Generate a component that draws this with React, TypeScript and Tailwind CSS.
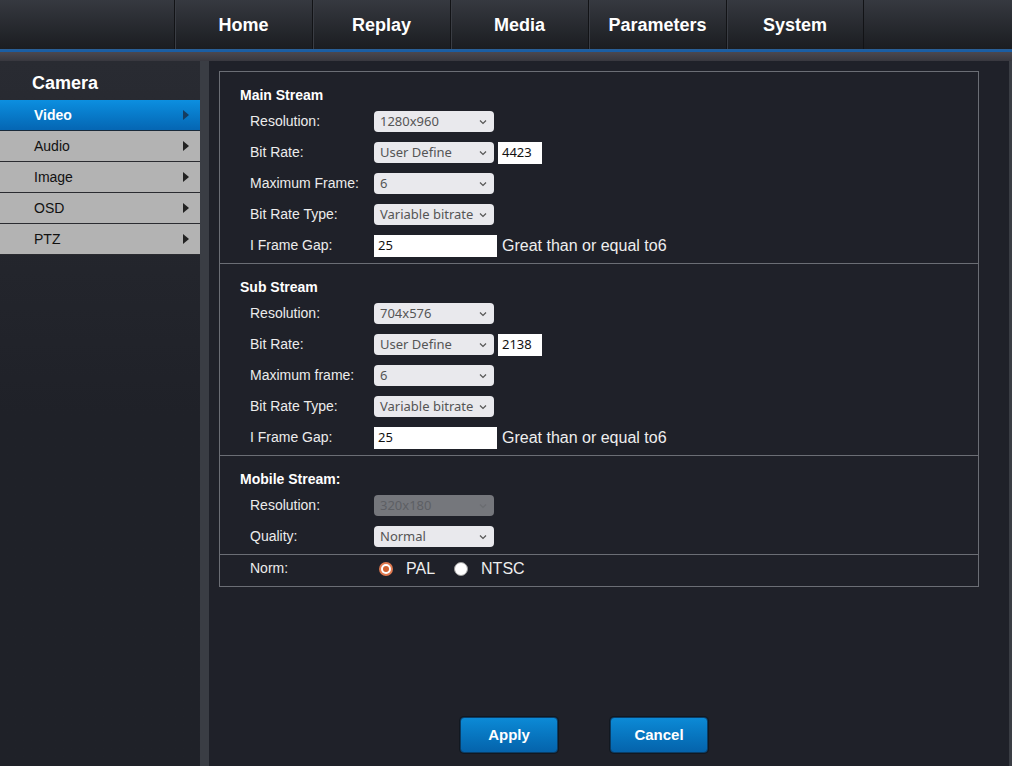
import React from "react";

const navItems = ["Home", "Replay", "Media", "Parameters", "System"];
const menu = ["Video", "Audio", "Image", "OSD", "PTZ"];

function Chevron({ color = "#555" }: { color?: string }) {
  return (
    <svg width="8" height="6" viewBox="0 0 8 6" className="shrink-0">
      <path d="M1 1.5 L4 4.5 L7 1.5" fill="none" stroke={color} strokeWidth="1.2" />
    </svg>
  );
}

function Select({ value, disabled = false }: { value: string; disabled?: boolean }) {
  return (
    <div
      className={
        disabled
          ? "w-[120px] h-[21px] rounded-[4px] bg-[#75777c] flex items-center justify-between pl-[6px] pr-[7px] text-[13px] text-[#5d5f64]"
          : "w-[120px] h-[21px] rounded-[4px] bg-[#e9e9ed] flex items-center justify-between pl-[6px] pr-[7px] text-[13px] text-[#555]"
      }
      style={{ fontFamily: '"Noto Sans", sans-serif' }}
    >
      <span className="whitespace-nowrap leading-none">{value}</span>
      <Chevron color={disabled ? "#6a6c70" : "#555"} />
    </div>
  );
}

function TextInput({ value, w }: { value: string; w: string }) {
  return (
    <div
      className={`${w} h-[22px] bg-white flex items-center pl-[4px] text-[13px] text-[#111]`}
      style={{ fontFamily: '"Noto Sans", sans-serif' }}
    >
      {value}
    </div>
  );
}

function Row({ label, children }: { label: string; children?: React.ReactNode }) {
  return (
    <div className="h-[31px] flex items-center pl-[30px]">
      <div className="w-[124px] text-[14px] text-[#ececec]">{label}</div>
      <div className="flex items-center">{children}</div>
    </div>
  );
}

function Heading({ text }: { text: string }) {
  return <div className="h-[21px] flex items-center pl-[20px] text-[14px] font-bold text-white">{text}</div>;
}

function Arrow({ color }: { color: string }) {
  return (
    <svg width="6" height="10" viewBox="0 0 6 10">
      <path d="M0 0 L6 5 L0 10 Z" fill={color} />
    </svg>
  );
}

export default function App() {
  return (
    <div
      className="w-[1012px] h-[766px] overflow-hidden bg-[#1f2128] flex flex-col"
      style={{ fontFamily: '"Liberation Sans", Arial, sans-serif' }}
    >
      {/* Header */}
      <div className="h-[49px] bg-gradient-to-b from-[#363940] to-[#1b1d21] flex pl-[174px]">
        {navItems.map((n, i) => (
          <div
            key={n}
            className={`w-[138px] h-full flex items-center justify-center pt-[2px] text-[18px] font-bold text-white border-l border-[#121316] shadow-[inset_1px_0_0_#3a3d44] ${
              i === navItems.length - 1 ? "border-r" : ""
            }`}
          >
            {n}
          </div>
        ))}
      </div>
      <div className="h-[1px] bg-[#2a5f96]" />
      <div className="h-[2px] bg-[#1a5ea5]" />
      <div className="h-[9px] bg-gradient-to-b from-[#4b4850] to-[#38383f]" />

      {/* Body */}
      <div className="flex-1 flex">
        {/* Sidebar */}
        <div className="w-[200px] bg-gradient-to-b from-[#292b32] via-[#1f2128] to-[#1f2128] flex flex-col">
          <div className="h-[39px] flex items-center pl-[32px] pt-[6px] text-[18px] font-bold text-white">Camera</div>
          {menu.map((m, i) =>
            i === 0 ? (
              <div
                key={m}
                className="h-[31px] border-b border-[#1a2a3a] bg-gradient-to-b from-[#0c8fe0] to-[#0566b3] flex items-center justify-between pl-[34px] pr-[11px] text-[14px] font-bold text-white"
              >
                <span>{m}</span>
                <Arrow color="#163c60" />
              </div>
            ) : (
              <div
                key={m}
                className="h-[31px] border-b border-[#2a2b30] bg-[#b3b3b3] flex items-center justify-between pl-[34px] pr-[11px] text-[14px] text-[#111]"
              >
                <span>{m}</span>
                <Arrow color="#222" />
              </div>
            )
          )}
        </div>
        <div className="w-[9px] bg-[#3a3d44]" />

        {/* Main */}
        <div className="flex-1 bg-[#1f2129] flex flex-col pl-[10px] pt-[10px]">
          <div className="w-[760px] border border-[#6b6e75] flex flex-col">
            <div className="pt-[13px] pb-[2px] border-b border-[#6b6e75]">
              <Heading text="Main Stream" />
              <Row label="Resolution:">
                <Select value="1280x960" />
              </Row>
              <Row label="Bit Rate:">
                <Select value="User Define" />
                <div className="ml-[4px]">
                  <TextInput value="4423" w="w-[44px]" />
                </div>
              </Row>
              <Row label="Maximum Frame:">
                <Select value="6" />
              </Row>
              <Row label="Bit Rate Type:">
                <Select value="Variable bitrate" />
              </Row>
              <Row label="I Frame Gap:">
                <TextInput value="25" w="w-[123px]" />
                <span className="ml-[5px] text-[16px] text-[#eeeeee]">Great than or equal to6</span>
              </Row>
            </div>
            <div className="pt-[13px] pb-[2px] border-b border-[#6b6e75]">
              <Heading text="Sub Stream" />
              <Row label="Resolution:">
                <Select value="704x576" />
              </Row>
              <Row label="Bit Rate:">
                <Select value="User Define" />
                <div className="ml-[4px]">
                  <TextInput value="2138" w="w-[44px]" />
                </div>
              </Row>
              <Row label="Maximum frame:">
                <Select value="6" />
              </Row>
              <Row label="Bit Rate Type:">
                <Select value="Variable bitrate" />
              </Row>
              <Row label="I Frame Gap:">
                <TextInput value="25" w="w-[123px]" />
                <span className="ml-[5px] text-[16px] text-[#eeeeee]">Great than or equal to6</span>
              </Row>
            </div>
            <div className="pt-[13px] pb-[2px] border-b border-[#6b6e75]">
              <Heading text="Mobile Stream:" />
              <Row label="Resolution:">
                <Select value="320x180" disabled />
              </Row>
              <Row label="Quality:">
                <Select value="Normal" />
              </Row>
            </div>
            <div className="h-[27px] mb-[4px] flex items-center pl-[30px]">
              <div className="w-[124px] text-[14px] text-[#ececec]">Norm:</div>
              <div className="flex items-center">
                <div className="ml-[5px] w-[14px] h-[14px] rounded-full bg-[#e0794f] flex items-center justify-center">
                  <div className="w-[10px] h-[10px] rounded-full bg-white flex items-center justify-center">
                    <div className="w-[6px] h-[6px] rounded-full bg-[#d0602f]" />
                  </div>
                </div>
                <span className="ml-[13px] text-[16px] text-[#eeeeee]">PAL</span>
                <div className="ml-[19px] w-[14px] h-[14px] rounded-full bg-white border border-[#9a9a9a]" />
                <span className="ml-[13px] text-[16px] text-[#eeeeee]">NTSC</span>
              </div>
            </div>
          </div>

          <div className="mt-[130px] pl-[241px] flex gap-[52px]">
            <button className="w-[98px] h-[36px] rounded-[4px] border border-[#0a3d66] bg-gradient-to-b from-[#0c8ad6] to-[#0563ab] text-[15px] font-bold text-white shadow-[0_0_0_1px_#121820]">
              Apply
            </button>
            <button className="w-[98px] h-[36px] rounded-[4px] border border-[#0a3d66] bg-gradient-to-b from-[#0c8ad6] to-[#0563ab] text-[15px] font-bold text-white shadow-[0_0_0_1px_#121820]">
              Cancel
            </button>
          </div>
        </div>
        <div className="w-[3px] bg-[#3a3d44]" />
      </div>
    </div>
  );
}
